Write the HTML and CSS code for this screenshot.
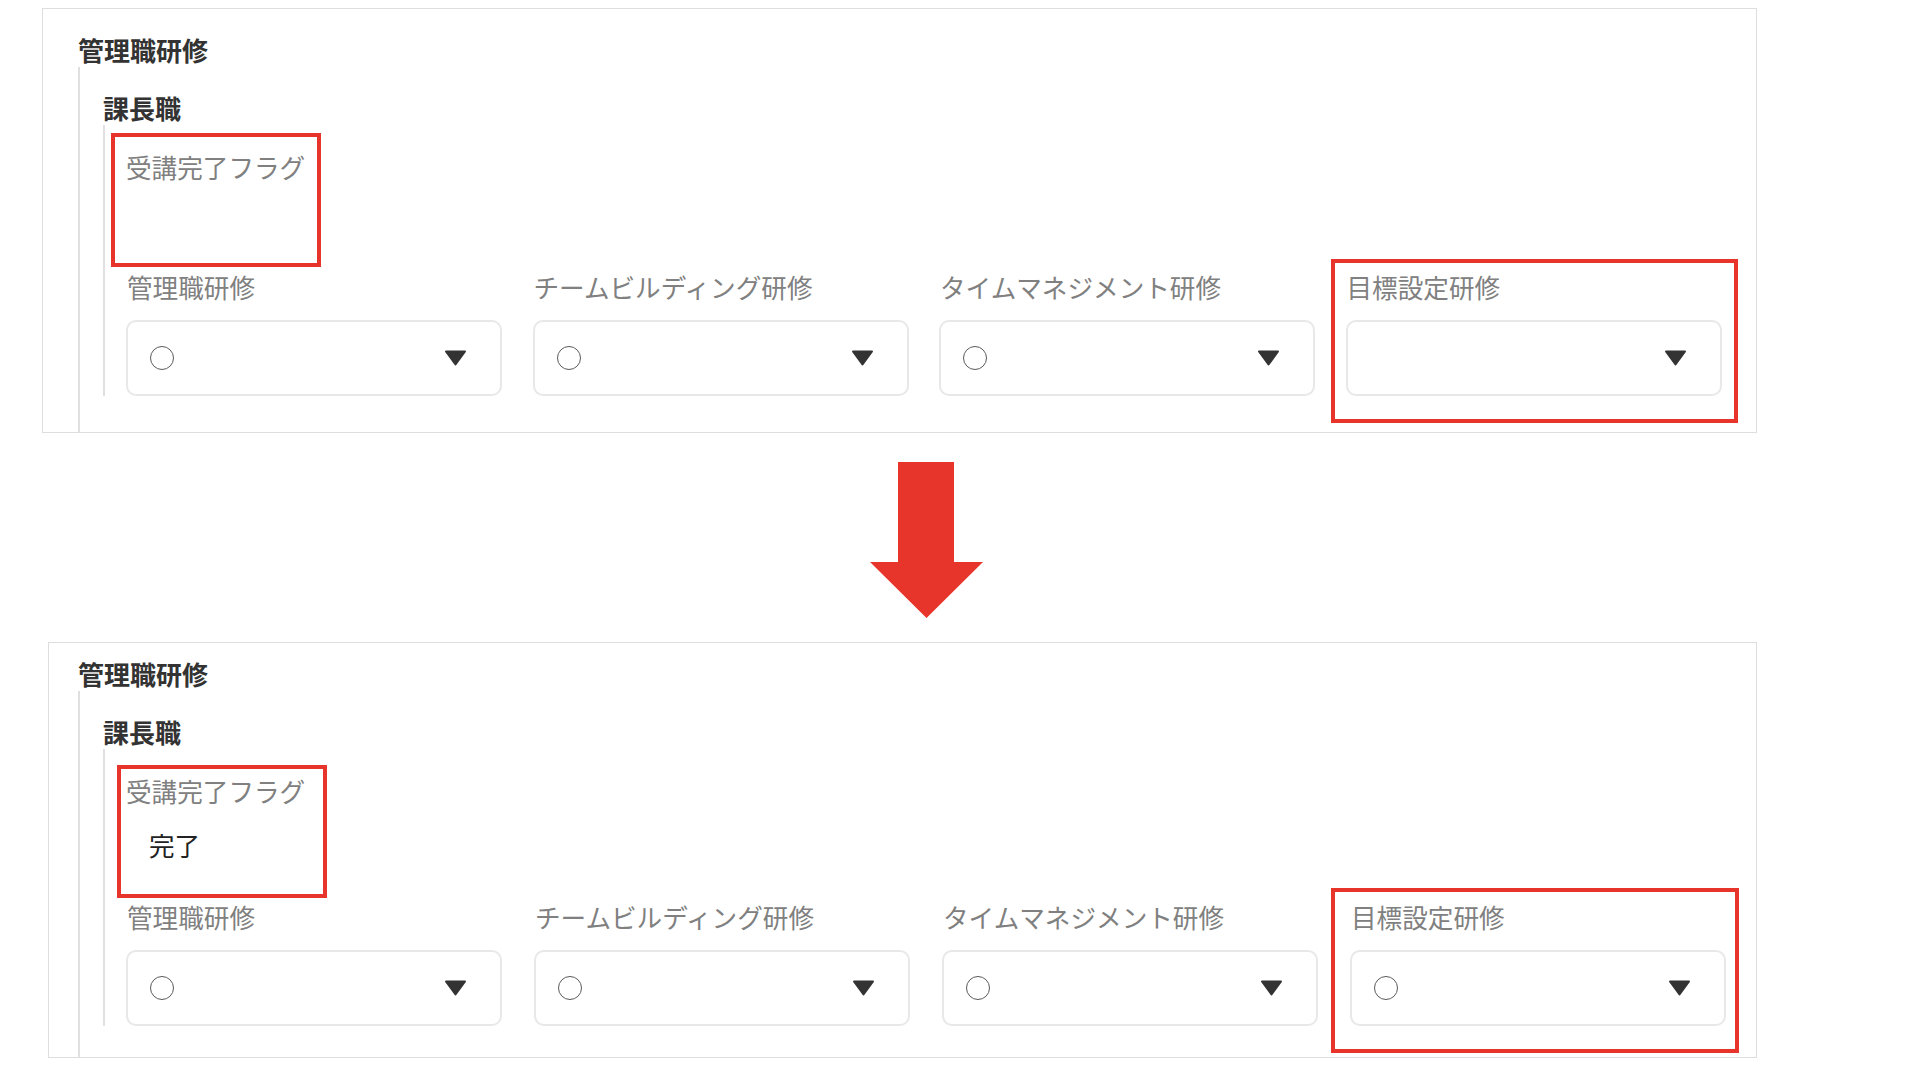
FILE: index.html
```html
<!DOCTYPE html>
<html lang="ja">
<head>
<meta charset="utf-8">
<title>管理職研修</title>
<link rel="stylesheet" href="styles.css">
</head>
<body>
<main class="page">
  <section class="panel panel--before">
    <h2 class="panel-title">管理職研修</h2>
    <div class="rail rail--outer rail--before">
      <h3 class="group-title">課長職</h3>
      <div class="rail rail--inner">
        <div class="flag mark mark--flag-before">
          <div class="field-label">受講完了フラグ</div>
          <div class="flag-value"></div>
        </div>
        <div class="fields fields--before">
          <div class="field">
            <div class="field-label">管理職研修</div>
            <div class="select"><span class="circle"></span><svg class="caret" width="23" height="16" viewBox="0 0 23 16"><path d="M2 1.5 L21 1.5 L11.5 14.5 Z"/></svg></div>
          </div>
          <div class="field">
            <div class="field-label">チームビルディング研修</div>
            <div class="select"><span class="circle"></span><svg class="caret" width="23" height="16" viewBox="0 0 23 16"><path d="M2 1.5 L21 1.5 L11.5 14.5 Z"/></svg></div>
          </div>
          <div class="field">
            <div class="field-label">タイムマネジメント研修</div>
            <div class="select"><span class="circle"></span><svg class="caret" width="23" height="16" viewBox="0 0 23 16"><path d="M2 1.5 L21 1.5 L11.5 14.5 Z"/></svg></div>
          </div>
          <div class="field mark mark--field-before">
            <div class="field-label">目標設定研修</div>
            <div class="select"><svg class="caret" width="23" height="16" viewBox="0 0 23 16"><path d="M2 1.5 L21 1.5 L11.5 14.5 Z"/></svg></div>
          </div>
        </div>
      </div>
    </div>
  </section>

  <div class="arrow-row">
    <svg class="arrow" width="113" height="156" viewBox="0 0 113 156"><polygon points="28,0 84,0 84,100 113,100 56.5,156 0,100 28,100"/></svg>
  </div>

  <section class="panel panel--after">
    <h2 class="panel-title">管理職研修</h2>
    <div class="rail rail--outer rail--after">
      <h3 class="group-title">課長職</h3>
      <div class="rail rail--inner">
        <div class="flag mark mark--flag-after">
          <div class="field-label">受講完了フラグ</div>
          <div class="flag-value">完了</div>
        </div>
        <div class="fields fields--after">
          <div class="field">
            <div class="field-label">管理職研修</div>
            <div class="select"><span class="circle"></span><svg class="caret" width="23" height="16" viewBox="0 0 23 16"><path d="M2 1.5 L21 1.5 L11.5 14.5 Z"/></svg></div>
          </div>
          <div class="field">
            <div class="field-label">チームビルディング研修</div>
            <div class="select"><span class="circle"></span><svg class="caret" width="23" height="16" viewBox="0 0 23 16"><path d="M2 1.5 L21 1.5 L11.5 14.5 Z"/></svg></div>
          </div>
          <div class="field">
            <div class="field-label">タイムマネジメント研修</div>
            <div class="select"><span class="circle"></span><svg class="caret" width="23" height="16" viewBox="0 0 23 16"><path d="M2 1.5 L21 1.5 L11.5 14.5 Z"/></svg></div>
          </div>
          <div class="field mark mark--field-after">
            <div class="field-label">目標設定研修</div>
            <div class="select"><span class="circle"></span><svg class="caret" width="23" height="16" viewBox="0 0 23 16"><path d="M2 1.5 L21 1.5 L11.5 14.5 Z"/></svg></div>
          </div>
        </div>
      </div>
    </div>
  </section>
</main>
</body>
</html>
```

FILE: styles.css
```css
*, *::before, *::after { box-sizing: border-box; }

body {
  margin: 0;
  background: #ffffff;
  font-family: "Noto Sans CJK JP", "Noto Sans", sans-serif;
  color: #333333;
}

.page {
  padding-top: 8px;
}

.panel {
  border: 1px solid #dedede;
  margin-right: 163px;
}

.panel--before {
  margin-left: 42px;
  padding: 24px 0 0 35px;
}

.panel--after {
  margin-left: 48px;
  padding: 14px 0 0 29px;
}

.panel-title,
.group-title {
  margin: 0;
  font-size: 26px;
  line-height: 34px;
  font-weight: 700;
  color: #333333;
}

.rail {
  border-left: 2px solid #e0e0e0;
}

.rail--outer {
  padding: 24px 0 0 23px;
}

.rail--before { padding-bottom: 36px; }
.rail--after { padding-bottom: 31px; }

.rail--inner {
  padding: 25px 0 0 21px;
}

.field-label {
  font-size: 25.6px;
  line-height: 34px;
  color: #808080;
  white-space: nowrap;
}

.flag {
  position: relative;
  width: 200px;
}

.flag-value {
  padding: 13px 0 0 23px;
  min-height: 55px;
  margin-bottom: 31px;
  font-size: 25.6px;
  line-height: 48px;
  color: #222222;
}

.fields {
  display: grid;
  grid-template-columns: repeat(4, 376px);
}

.fields--before { column-gap: 30.5px; }
.fields--after { column-gap: 32px; }

.field {
  position: relative;
}

.field .field-label {
  margin-bottom: 16px;
  padding-left: 1px;
}

.select {
  height: 76px;
  border: 2px solid #e8e8e8;
  border-radius: 10px;
  display: flex;
  align-items: center;
  padding: 0 33px 0 22px;
}

.circle {
  width: 24px;
  height: 24px;
  border: 1.5px solid #5a5a5a;
  border-radius: 50%;
}

.caret {
  margin-left: auto;
  display: block;
}

.caret path {
  fill: #333333;
  stroke: #333333;
  stroke-width: 2;
  stroke-linejoin: round;
}

/* red annotation frames */
.mark::after {
  content: "";
  position: absolute;
  border: 4px solid #e8352b;
  pointer-events: none;
}

.mark--flag-before::after { left: -15px; top: -17px; width: 210px; height: 134px; }
.mark--flag-after::after { left: -9px; top: -9px; width: 210px; height: 133px; }
.mark--field-before::after { left: -15px; top: -11px; width: 407px; height: 164px; }
.mark--field-after::after { left: -19px; top: -12px; width: 408px; height: 165px; }

.arrow-row {
  padding: 29px 0 24px 870px;
}

.arrow {
  display: block;
}

.arrow polygon {
  fill: #e8352b;
}
```
